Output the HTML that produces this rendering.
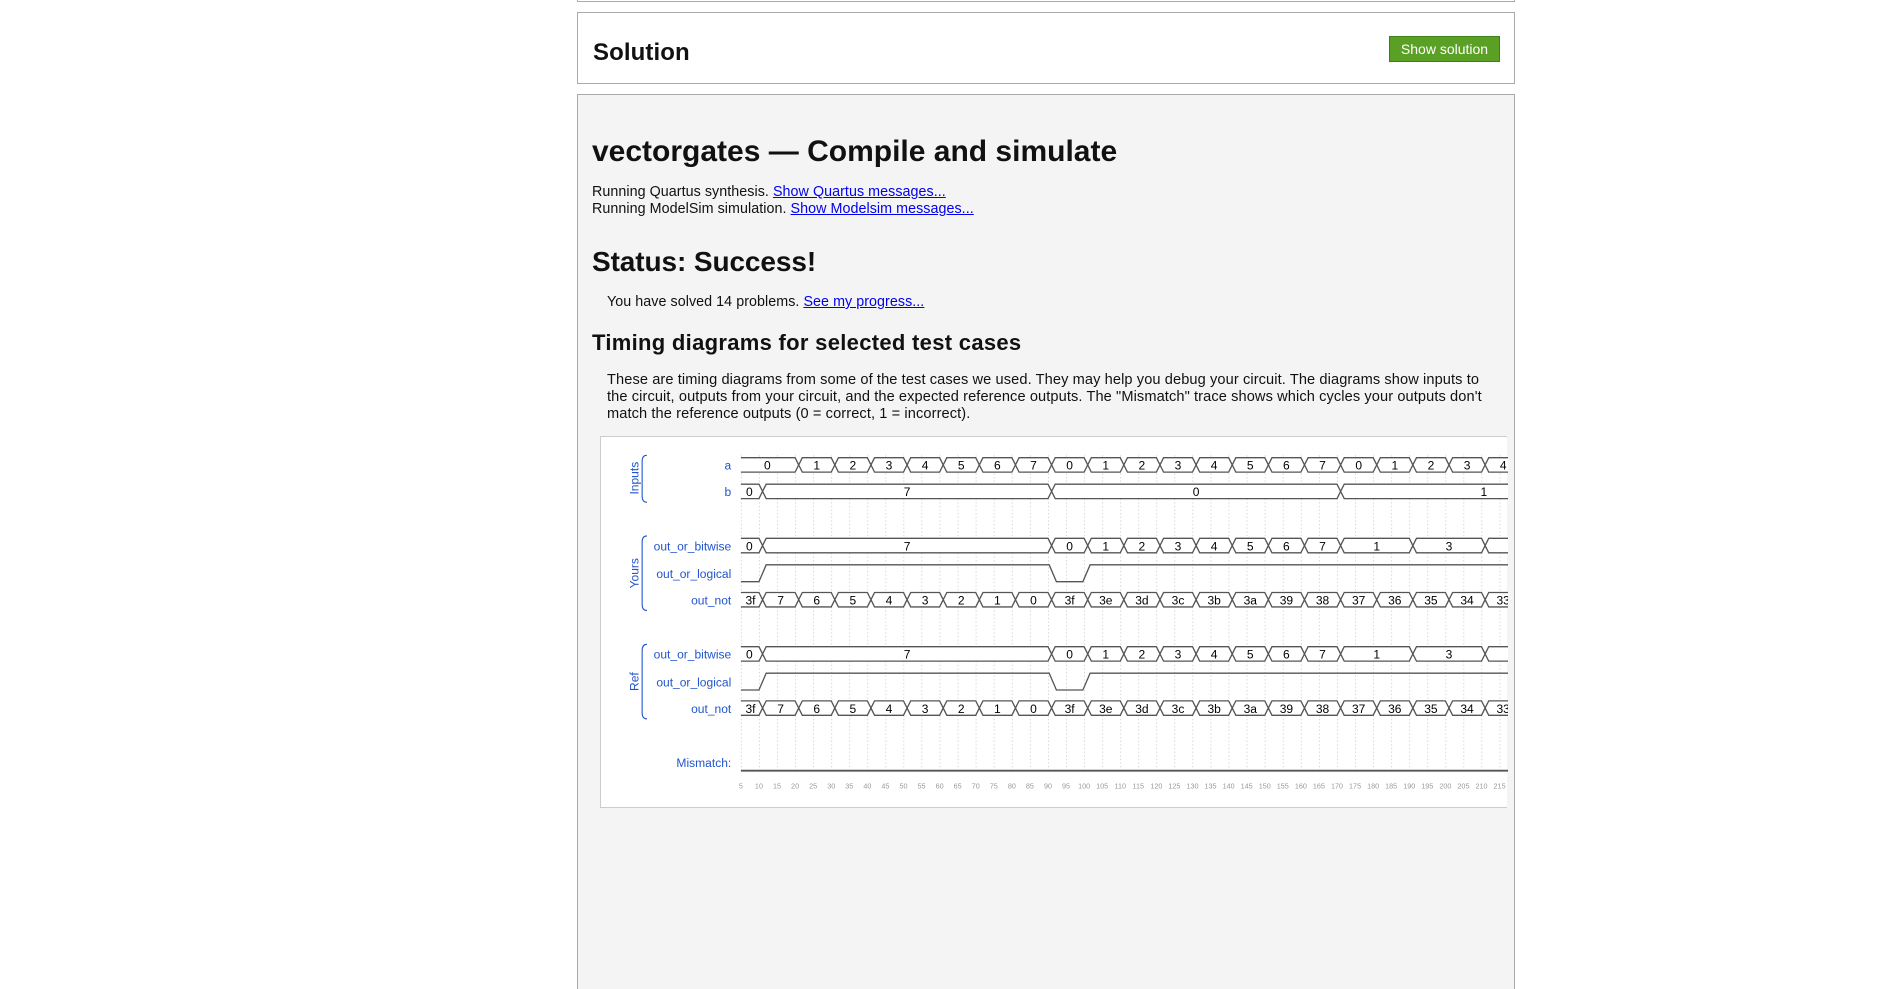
<!DOCTYPE html>
<html><head><meta charset="utf-8"><style>
html,body{margin:0;padding:0;background:#fff;width:1888px;height:989px;overflow:hidden;position:relative;font-family:"Liberation Sans",Arial,sans-serif;}
.abs{position:absolute;white-space:nowrap;}
a{color:#00e;text-decoration:underline;}
.t{font-size:14.3px;color:#111;line-height:17px;letter-spacing:0.05px;}
.h{font-weight:bold;color:#111;line-height:1;}
</style></head><body>
<div class="abs" style="left:577px;top:-10px;width:936px;height:11px;border:1px solid #aaa;border-top:none;background:#fff"></div>
<div class="abs" style="left:577px;top:12px;width:936px;height:70px;border:1px solid #aaa;background:#fff"></div>
<div class="abs h" style="left:593px;top:41px;font-size:24px;letter-spacing:0.1px">Solution</div>
<div class="abs" style="left:1389px;top:36px;width:109px;height:24px;background:#5aa024;border:1px solid #3f7f18;color:#fff;font-size:14px;line-height:24px;text-align:center">Show solution</div>

<div class="abs" style="left:577px;top:94px;width:936px;height:920px;border:1px solid #aaa;background:#f4f4f4"></div>
<div class="abs h" style="left:592px;top:137px;font-size:30px;letter-spacing:0px">vectorgates — Compile and simulate</div>
<div class="abs t" style="left:592px;top:184px">Running Quartus synthesis. <a>Show Quartus messages...</a><br>Running ModelSim simulation. <a>Show Modelsim messages...</a></div>
<div class="abs h" style="left:592px;top:248px;font-size:28px;letter-spacing:-0.1px">Status: Success!</div>
<div class="abs t" style="left:607px;top:294px">You have solved 14 problems. <a>See my progress...</a></div>
<div class="abs h" style="left:592px;top:332px;font-size:22px;letter-spacing:0.3px">Timing diagrams for selected test cases</div>
<div class="abs t" style="left:607px;top:372px;width:890px;white-space:normal;font-size:14.6px;letter-spacing:0.1px">These are timing diagrams from some of the test cases we used. They may help you debug your circuit. The diagrams show inputs to the circuit, outputs from your circuit, and the expected reference outputs. The "Mismatch" trace shows which cycles your outputs don't match the reference outputs (0 = correct, 1 = incorrect).</div>

<div class="abs" style="left:600px;top:436px;width:906px;height:370px;border:1px solid #ccc;border-right:none;background:#fff"></div>
<svg class="abs" style="left:600px;top:436px" width="908" height="372" viewBox="498 362 754 309" preserveAspectRatio="none">
<defs><pattern id="g" x="615" y="0" width="15" height="3" patternUnits="userSpaceOnUse"><rect width="0.6" height="1.2" fill="#c8c8c8"/></pattern><clipPath id="c"><rect x="498" y="362" width="754" height="309"/></clipPath></defs>
<rect x="614.7" y="376" width="640" height="266" fill="url(#g)"/>
<g clip-path="url(#c)" fill="#fff" stroke="#555" stroke-width="1.1">
<path d="M615 380h45l3 6l-3 6h-45 M663 386 l3-6h24l3 6l-3 6h-24zm30 0 l3-6h24l3 6l-3 6h-24zm30 0 l3-6h24l3 6l-3 6h-24zm30 0 l3-6h24l3 6l-3 6h-24zm30 0 l3-6h24l3 6l-3 6h-24zm30 0 l3-6h24l3 6l-3 6h-24zm30 0 l3-6h24l3 6l-3 6h-24zm30 0 l3-6h24l3 6l-3 6h-24zm30 0 l3-6h24l3 6l-3 6h-24zm30 0 l3-6h24l3 6l-3 6h-24zm30 0 l3-6h24l3 6l-3 6h-24zm30 0 l3-6h24l3 6l-3 6h-24zm30 0 l3-6h24l3 6l-3 6h-24zm30 0 l3-6h24l3 6l-3 6h-24zm30 0 l3-6h24l3 6l-3 6h-24zm30 0 l3-6h24l3 6l-3 6h-24zm30 0 l3-6h24l3 6l-3 6h-24zm30 0 l3-6h24l3 6l-3 6h-24zm30 0 l3-6h24l3 6l-3 6h-24zm30 0 l3-6h24l3 6l-3 6h-24z"/>
<path d="M615 402h15l3 6l-3 6h-15 M633 408l3-6h234l3 6l-3 6h-234z M873 408l3-6h234l3 6l-3 6h-234z M1113 408l3-6h234l3 6l-3 6h-234z"/>
<path id="bw" d="M615 447h15l3 6l-3 6h-15 M633 453l3-6h234l3 6l-3 6h-234z M873 453 l3-6h24l3 6l-3 6h-24zm30 0 l3-6h24l3 6l-3 6h-24zm30 0 l3-6h24l3 6l-3 6h-24zm30 0 l3-6h24l3 6l-3 6h-24zm30 0 l3-6h24l3 6l-3 6h-24zm30 0 l3-6h24l3 6l-3 6h-24zm30 0 l3-6h24l3 6l-3 6h-24zm30 0 l3-6h24l3 6l-3 6h-24z M1113 453 l3-6h54l3 6l-3 6h-54zm60 0 l3-6h54l3 6l-3 6h-54zm60 0 l3-6h54l3 6l-3 6h-54z"/>
<path id="nt" d="M615 492h15l3 6l-3 6h-15 M633 498 l3-6h24l3 6l-3 6h-24zm30 0 l3-6h24l3 6l-3 6h-24zm30 0 l3-6h24l3 6l-3 6h-24zm30 0 l3-6h24l3 6l-3 6h-24zm30 0 l3-6h24l3 6l-3 6h-24zm30 0 l3-6h24l3 6l-3 6h-24zm30 0 l3-6h24l3 6l-3 6h-24zm30 0 l3-6h24l3 6l-3 6h-24zm30 0 l3-6h24l3 6l-3 6h-24zm30 0 l3-6h24l3 6l-3 6h-24zm30 0 l3-6h24l3 6l-3 6h-24zm30 0 l3-6h24l3 6l-3 6h-24zm30 0 l3-6h24l3 6l-3 6h-24zm30 0 l3-6h24l3 6l-3 6h-24zm30 0 l3-6h24l3 6l-3 6h-24zm30 0 l3-6h24l3 6l-3 6h-24zm30 0 l3-6h24l3 6l-3 6h-24zm30 0 l3-6h24l3 6l-3 6h-24zm30 0 l3-6h24l3 6l-3 6h-24zm30 0 l3-6h24l3 6l-3 6h-24zm30 0 l3-6h24l3 6l-3 6h-24z"/>
<use href="#bw" y="90"/><use href="#nt" y="90"/>
<path fill="none" d="M615 483H630L636 469H871L877 483H899L905 469H1260"/>
<path fill="none" d="M615 573H630L636 559H871L877 573H899L905 559H1260"/>
<path fill="none" stroke-width="1.5" d="M615 640H1260"/>
</g>
<g fill="none" stroke="#2255cc" stroke-width="0.9">
<path d="M537 378Q533 378 533 383V412Q533 417 537 417"/>
<path d="M537 445Q533 445 533 450V502Q533 507 537 507"/>
<path d="M537 535Q533 535 533 540V592Q533 597 537 597"/>
</g>
<g fill="#2255cc" font-family="Liberation Sans,Arial,sans-serif" font-size="10">
<text x="530" y="397" transform="rotate(-90 530 397)" text-anchor="middle">Inputs</text>
<text x="530" y="476" transform="rotate(-90 530 476)" text-anchor="middle">Yours</text>
<text x="530" y="566" transform="rotate(-90 530 566)" text-anchor="middle">Ref</text>
<g text-anchor="end">
<text x="607" y="390">a</text><text x="607" y="412">b</text>
<text x="607" y="457">out_or_bitwise</text><text x="607" y="480">out_or_logical</text><text x="607" y="502">out_not</text>
<text x="607" y="547">out_or_bitwise</text><text x="607" y="570">out_or_logical</text><text x="607" y="592">out_not</text>
<text x="607" y="637">Mismatch:</text></g>
</g>
<g fill="#000" font-family="Liberation Sans,Arial,sans-serif" font-size="10" text-anchor="middle" clip-path="url(#c)">
<g transform="translate(0,390)"><text x="637">0</text><text x="678">1</text><text x="708">2</text><text x="738">3</text><text x="768">4</text><text x="798">5</text><text x="828">6</text><text x="858">7</text><text x="888">0</text><text x="918">1</text><text x="948">2</text><text x="978">3</text><text x="1008">4</text><text x="1038">5</text><text x="1068">6</text><text x="1098">7</text><text x="1128">0</text><text x="1158">1</text><text x="1188">2</text><text x="1218">3</text><text x="1248">4</text></g>
<g transform="translate(0,412)"><text x="622">0</text><text x="753">7</text><text x="993">0</text><text x="1232">1</text></g>
<g transform="translate(0,457)"><text x="622">0</text><text x="753">7</text><text x="888">0</text><text x="918">1</text><text x="948">2</text><text x="978">3</text><text x="1008">4</text><text x="1038">5</text><text x="1068">6</text><text x="1098">7</text><text x="1143">1</text><text x="1203">3</text></g>
<g transform="translate(0,547)"><text x="622">0</text><text x="753">7</text><text x="888">0</text><text x="918">1</text><text x="948">2</text><text x="978">3</text><text x="1008">4</text><text x="1038">5</text><text x="1068">6</text><text x="1098">7</text><text x="1143">1</text><text x="1203">3</text></g>
<g transform="translate(0,502)"><text x="623">3f</text><text x="648">7</text><text x="678">6</text><text x="708">5</text><text x="738">4</text><text x="768">3</text><text x="798">2</text><text x="828">1</text><text x="858">0</text><text x="888">3f</text><text x="918">3e</text><text x="948">3d</text><text x="978">3c</text><text x="1008">3b</text><text x="1038">3a</text><text x="1068">39</text><text x="1098">38</text><text x="1128">37</text><text x="1158">36</text><text x="1188">35</text><text x="1218">34</text><text x="1248">33</text></g>
<g transform="translate(0,592)"><text x="623">3f</text><text x="648">7</text><text x="678">6</text><text x="708">5</text><text x="738">4</text><text x="768">3</text><text x="798">2</text><text x="828">1</text><text x="858">0</text><text x="888">3f</text><text x="918">3e</text><text x="948">3d</text><text x="978">3c</text><text x="1008">3b</text><text x="1038">3a</text><text x="1068">39</text><text x="1098">38</text><text x="1128">37</text><text x="1158">36</text><text x="1188">35</text><text x="1218">34</text><text x="1248">33</text></g>
</g>
<g fill="#999" font-family="Liberation Sans,Arial,sans-serif" font-size="6" text-anchor="middle" transform="translate(0,655)">
<text x="615">5</text><text x="630">10</text><text x="645">15</text><text x="660">20</text><text x="675">25</text><text x="690">30</text><text x="705">35</text><text x="720">40</text><text x="735">45</text><text x="750">50</text><text x="765">55</text><text x="780">60</text><text x="795">65</text><text x="810">70</text><text x="825">75</text><text x="840">80</text><text x="855">85</text><text x="870">90</text><text x="885">95</text><text x="900">100</text><text x="915">105</text><text x="930">110</text><text x="945">115</text><text x="960">120</text><text x="975">125</text><text x="990">130</text><text x="1005">135</text><text x="1020">140</text><text x="1035">145</text><text x="1050">150</text><text x="1065">155</text><text x="1080">160</text><text x="1095">165</text><text x="1110">170</text><text x="1125">175</text><text x="1140">180</text><text x="1155">185</text><text x="1170">190</text><text x="1185">195</text><text x="1200">200</text><text x="1215">205</text><text x="1230">210</text><text x="1245">215</text>
</g>
</svg>
</body></html>
